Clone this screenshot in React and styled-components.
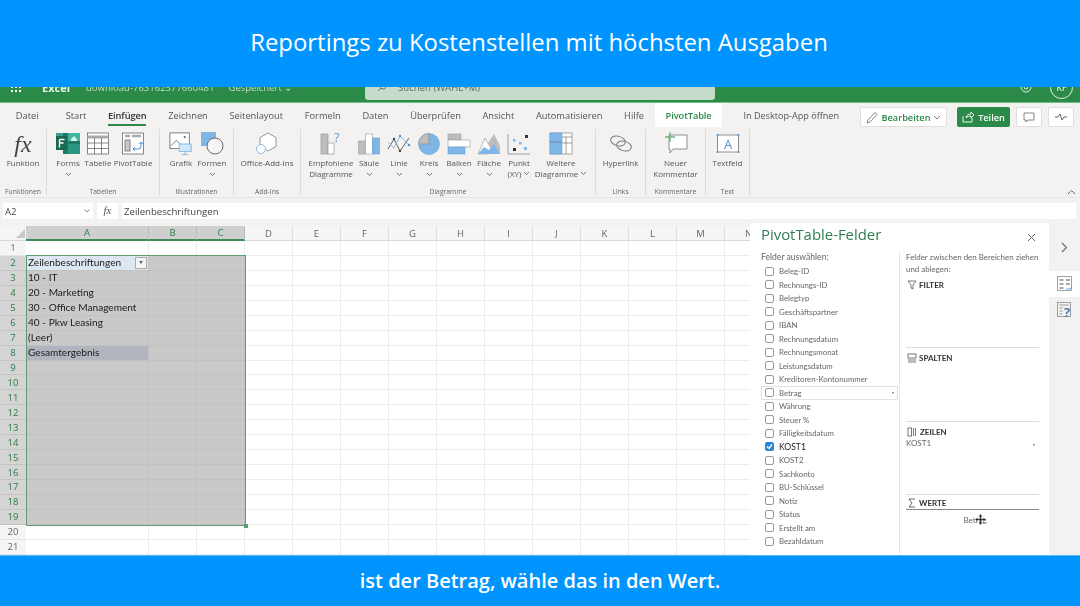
import React from "react";
import styled, { createGlobalStyle } from "styled-components";

const Global = createGlobalStyle`
  html, body { margin: 0; padding: 0; width: 1080px; height: 606px; overflow: hidden; background: #fff; }
  * { box-sizing: border-box; }
`;

const Page = styled.div`
  width: 1080px; height: 606px; display: flex; flex-direction: column; overflow: hidden;
  font-family: "Open Sans", "Liberation Sans", sans-serif; color: #444;
`;
const TopBanner = styled.div`
  height: 87px; background: #0094fe; color: #fff; display: flex; align-items: center; justify-content: center;
  font-size: 23.9px; padding: 0 2px 4px 0; flex: none;
`;
const BottomBanner = styled.div`
  height: 51px; background: #0094fe; color: #fff; display: flex; align-items: center; justify-content: center;
  font-size: 20px; font-weight: 600; padding-bottom: 2px; flex: none; border-top: 1px solid #5cb8f5;
`;
const Workspace = styled.div`
  flex: 1; display: flex; flex-direction: column; min-height: 0; background: #f3f2f1; filter: blur(0.4px);
`;
const AppBar = styled.div`height: 16px; background: #2b8a47; overflow: hidden; flex: none; border-bottom: 1px solid #6fbf80;`;
const AppBarInner = styled.div`
  height: 32px; margin-top: -16px; display: flex; align-items: center; color: #c4dfcc; font-size: 9.5px; position: relative;
`;
const Waffle = styled.div`
  width: 11px; margin-left: 11px; display: grid; grid-template-columns: repeat(3, 2px); gap: 2px;
  span { width: 2px; height: 2px; background: #fff; }
`;
const AppName = styled.div`margin-left: 20px; width: 44px; font-weight: 700; color: #e8f3ea; font-size: 11px;`;
const DocName = styled.div`width: 279px; white-space: nowrap; display: flex; gap: 14px;`;
const SearchBox = styled.div`
  width: 350px; height: 26px; background: #c6dccb; border-radius: 3px; color: #5d6d62;
  display: flex; align-items: center; gap: 11px; padding-left: 12px; font-size: 9.6px;
`;
const AppRight = styled.div`margin-left: auto; margin-right: 7px; display: flex; align-items: center; gap: 17px;`;
const Avatar = styled.div`
  width: 23px; height: 23px; border: 1px solid #e5f1e7; border-radius: 50%; font-size: 9px; color: #fff;
  display: flex; align-items: center; justify-content: center;
`;

const TabRow = styled.div`height: 24px; display: flex; align-items: stretch; padding-left: 5px; flex: none; font-size: 9.3px; color: #555;`;
const Tab = styled.div`
  padding: 0 10.8px; margin-right: ${p => p.$gap || 0}px; display: flex; align-items: center; white-space: nowrap; position: relative;
  color: ${p => p.$active ? "#333" : p.$context ? "#2b8a47" : "#555"};
  font-weight: ${p => (p.$active || p.$context) ? 600 : 400};
  letter-spacing: ${p => (p.$active || p.$context) ? "-0.1px" : 0};
  background: ${p => p.$context ? "#fff" : "transparent"};
  ${p => p.$active && `&::after { content: ""; position: absolute; left: 11px; right: 11px; bottom: 1px; height: 2px; background: #2b8a47; }`}
`;
const DesktopLink = styled.div`margin-left: 21px; display: flex; align-items: center; white-space: nowrap; font-size: 9.1px;`;
const TabRight = styled.div`margin-left: auto; display: flex; flex: none;`;
const EditButton = styled.div`
  width: 87px; height: 20px; margin-top: 4px; background: #fff; border: 1px solid #e0dfde; border-radius: 2px; color: #2b8a47; font-weight: 600;
  display: flex; align-items: center; justify-content: center; gap: 3px; font-size: 9.2px;
`;
const ShareButton = styled.div`
  width: 53px; height: 20px; margin: 4px 6px 0 10px; background: #2b8a47; border-radius: 2px; color: #fff; font-weight: 600;
  display: flex; align-items: center; justify-content: center; gap: 3px; font-size: 9.2px;
`;
const IconButton = styled.div`
  width: 26px; height: 20px; margin: 4px 6px 0 0; background: #fff; border: 1px solid #e0dfde; border-radius: 2px;
  display: flex; align-items: center; justify-content: center;
`;

const Ribbon = styled.div`
  height: 71px; display: flex; flex: none; position: relative; border-bottom: 1px solid #e6e5e4;
`;
const Group = styled.div`
  width: ${p => p.$w}px; flex: none; margin-right: 1px; display: flex; flex-direction: column; position: relative; padding-top: 5px;
  &::after { content: ""; position: absolute; right: -1px; top: 2px; bottom: 2px; width: 1px; background: #dcdbda; }
`;
const GroupButtons = styled.div`flex: 1; display: flex; padding-left: ${p => p.$pad || 0}px;`;
const GroupLabel = styled.div`height: 11px; text-align: center; font-size: 6.8px; color: #666; line-height: 12px;`;
const RibbonButton = styled.div`
  width: ${p => p.$w}px; flex: none; display: flex; flex-direction: column; align-items: center;
  font-size: 8px; line-height: 10.5px; color: #555; text-align: center; white-space: nowrap;
`;
const IconSlot = styled.div`height: 24px; margin-bottom: 2px; display: flex; align-items: center; justify-content: center;`;
const Fx = styled.span`font: italic 24px "Liberation Serif", serif; color: #444;`;
const Caret = styled.svg`width: 7px; height: 5px; display: ${p => p.$inline ? "inline-block" : "block"}; margin: ${p => p.$inline ? "0 0 1px 2px" : "3px auto 0"};`;
const Collapse = styled.svg`position: absolute; right: 4px; bottom: 2px; width: 9px; height: 6px;`;

const FormulaBar = styled.div`
  height: 22px; flex: none; padding: 5px 4px 0 3px; display: flex; gap: 4px; background: #f3f2f1;
`;
const NameBox = styled.div`
  width: 90px; height: 16px; background: #fff; display: flex; align-items: center; justify-content: space-between;
  padding: 0 3px 0 2px; font-size: 9.5px; color: #444;
`;
const FxBox = styled.div`width: 21px; height: 16px; background: #fff; text-align: center; font: italic 11px/15px "Liberation Serif", serif; color: #555;`;
const FormulaInput = styled.div`flex: 1; height: 16px; background: #fff; font-size: 9.6px; line-height: 17px; padding-left: 2px; color: #444;`;

const Main = styled.div`flex: 1; min-height: 0; display: flex; background: #f3f2f1;`;
const SheetArea = styled.div`width: 750px; flex: none; padding-top: 6px; overflow: hidden;`;
const Sheet = styled.div`
  position: relative; display: grid; background: #fff; width: 750px; height: 330px;
  grid-template-columns: 26px 123px 48px 48px repeat(11, 48px);
  grid-template-rows: 15px repeat(21, 14.95px);
  font-family: Lato, "Open Sans", sans-serif;
`;
const Corner = styled.div`
  background: #f5f5f5; border-bottom: 1px solid #d8d8d8; position: relative;
  &::after { content: ""; position: absolute; right: 1px; bottom: 2px; border-style: solid; border-width: 0 0 9px 9px; border-color: transparent transparent #c8c8c8 transparent; }
`;
const ColHead = styled.div`
  display: flex; align-items: center; justify-content: center; font-size: 9.5px; font-family: "Open Sans", sans-serif;
  background: ${p => p.$sel ? "#cfcfcf" : "#f5f5f5"};
  color: ${p => p.$sel ? "#2b7a45" : "#666"};
  border-right: 1px solid ${p => p.$sel ? "#bdbdbd" : "#e0e0e0"};
  border-bottom: ${p => p.$sel ? "2px solid #3f8a58" : "1px solid #d8d8d8"};
`;
const RowHead = styled.div`
  display: flex; align-items: center; justify-content: center; font-size: 9.5px; font-family: "Open Sans", sans-serif;
  background: ${p => p.$sel ? "#d4d4d4" : "#f5f5f5"};
  color: ${p => p.$sel ? "#2b7a45" : "#666"};
  border-bottom: 1px solid ${p => p.$sel ? "#c4c4c4" : "#e4e4e4"};
`;
const Cell = styled.div`
  position: relative; display: flex; align-items: center; padding: 0 0 1px 2px; font-size: 10.1px; color: #1a1a1a; white-space: nowrap;
  background: ${p => p.$bg || "#fff"};
  border-right: 1px solid ${p => p.$sel ? "#c2c2c2" : "#ececec"};
  border-bottom: 1px solid ${p => p.$sel ? "#c2c2c2" : "#ececec"};
`;
const FilterBtn = styled.div`
  position: absolute; right: 1px; top: 1px; width: 12px; height: 12px; background: #f4f4f4; border: 1px solid #aaa;
  display: flex; align-items: center; justify-content: center;
  &::after { content: ""; border-style: solid; border-width: 3px 2.5px 0; border-color: #666 transparent transparent; }
`;
const Selection = styled.div`
  position: absolute; left: 26px; top: 29px; width: 220px; height: 271px; border: 1.5px solid #5f9a73; pointer-events: none;
  &::after { content: ""; position: absolute; right: -3px; bottom: -3px; width: 4px; height: 4px; background: #5f9a73; }
`;

const Panel = styled.div`width: 299px; flex: none; margin-top: 3px; background: #fff; display: flex; flex-direction: column; position: relative; font-family: Lato, "Open Sans", sans-serif;`;
const PanelHead = styled.div`height: 29px; padding: 0 13px 0 11px; display: flex; align-items: flex-start; justify-content: space-between;`;
const PanelTitle = styled.div`font-family: "Open Sans", sans-serif; font-size: 14.9px; line-height: 22px; color: #2f7d4f;`;
const CloseIcon = styled.svg`margin-top: 10px;`;
const PanelColumns = styled.div`flex: 1; min-height: 0; display: flex;`;
const FieldCol = styled.div`width: 150px; flex: none; padding-left: 11px; border-right: 1px solid #e6e6e6; overflow: hidden;`;
const Hint = styled.div`font-size: 7.95px; line-height: 12px; color: #666; white-space: nowrap;`;
const FieldHint = styled(Hint)`height: 12.5px; font-size: 8.6px; line-height: 10px;`;
const FieldList = styled.div`display: flex; flex-direction: column;`;
const Field = styled.div`
  height: 13.5px; display: flex; align-items: center; gap: 5px; padding-left: 4px; margin-right: 1px; font-size: 7.8px; position: relative;
  color: ${p => p.$on ? "#222" : "#666"};
  font-size: ${p => p.$on ? "8.6px" : "7.8px"};
  ${p => p.$hover && `outline: 1px solid #e2e2e2; outline-offset: -1px;`}
`;
const Box = styled.div`
  width: 9px; height: 9px; border-radius: 2px; flex: none;
  border: 1px solid ${p => p.$on ? "#2b88d8" : "#999"}; background: ${p => p.$on ? "#2b88d8" : "#fff"};
  display: flex; align-items: center; justify-content: center;
`;
const MiniCaret = styled.span`position: absolute; right: 4px; top: 6px; border-style: solid; border-width: 2px 1.5px 0; border-color: #666 transparent transparent;`;
const ZoneCol = styled.div`flex: 1; min-width: 0; padding: 0 10px 0 6px; display: flex; flex-direction: column; margin-top: -1px;`;
const ZoneHint = styled(Hint)`height: 23.5px;`;
const Zone = styled.div`
  height: ${p => p.$h}px; flex: none; border-bottom: ${p => p.$line ? "1px solid #dedede" : 0};
  padding-top: 5px; font-size: 8px; color: #555;
`;
const ZoneTitle = styled.div`
  display: flex; align-items: center; gap: 2px; font-size: 8px; font-weight: 700; color: #333; height: 11px; padding-left: 1px;
  ${p => p.$under && `border-bottom: 1px solid #888; height: 12px; margin-top: -2px;`}
`;
const ZoneItem = styled.div`
  display: flex; align-items: center; height: 11px; padding-right: 5px; position: relative;
  font-size: 8px; color: #666; margin-top: ${p => p.$mt || 0}px; justify-content: ${p => p.$center ? "center" : "space-between"};
  padding-left: ${p => p.$center ? "10px" : 0};
`;
const Cursor = styled.svg`position: absolute; left: 69px; top: 0; width: 11px; height: 11px;`;
const Strip = styled.div`flex: 1; margin-top: 3px; display: flex; flex-direction: column; background: #f3f2f1;`;
const StripTop = styled.div`height: 48px; display: flex; align-items: center; justify-content: center;`;
const StripTab = styled.div`height: 26px; background: ${p => p.$active ? "#fff" : "transparent"}; display: flex; align-items: center; justify-content: center;`;

const BLUE = "#7fb6e8", GRAY = "#bdbdbd", DARK = "#6a6a6a";

const TableIcon = () => (<svg width="24" height="24" viewBox="0 0 24 24" fill="none" stroke={DARK} strokeWidth=".8"><rect x="1.5" y="1" width="21" height="21" fill="#fff"/><path d="M1.5 5h21" strokeWidth="3" stroke="#a8a8a8"/><path d="M1.5 11h21M1.5 16.5h21M8.5 6v16M15.5 6v16"/></svg>);
const PivotIcon = () => (<svg width="24" height="24" viewBox="0 0 24 24" fill="none" stroke={DARK} strokeWidth=".8"><rect x="1.5" y="1" width="21" height="21" fill="#fff"/><path d="M4 4h5M11 4h9" stroke="#aaa" strokeWidth="2.5"/><rect x="4" y="8" width="5" height="11" fill="#c8c8c8"/><path d="M12 17h5a3 3 0 0 0 3-3v-4M18 12l2-2 2 2M14 15l-2 2 2 2" stroke="#4a90d9" strokeWidth="1"/></svg>);
const FormsIcon = () => (<svg width="26" height="24" viewBox="0 0 26 24"><rect x="1" y="1" width="24" height="16" fill="#3aa08c"/><rect x="8" y="1" width="17" height="21" fill="#1f7a66"/><rect x="13" y="1" width="12" height="8" fill="#3fb6a0"/><rect x="13" y="12" width="12" height="10" fill="#2c9680"/><rect x="1" y="4" width="11" height="14" fill="#17694f"/><path d="M4.500 7.500h5M4.500 7.500v8M4.500 11h4" stroke="#fff" strokeWidth="1.400" fill="none"/><path d="M16 7l3-3 3 3v2h-6z" fill="#d5f0e8"/></svg>);
const PictureIcon = () => (<svg width="26" height="24" viewBox="0 0 26 26" fill="none"><rect x="1" y="1" width="21" height="17" fill="#fff" stroke={DARK} strokeWidth=".9"/><path d="M2 15l6-6 6 6" stroke={DARK} strokeWidth=".9"/><circle cx="17" cy="5.500" r="1.200" fill={DARK}/><rect x="11" y="13" width="13" height="8" fill="#d4e8f8" stroke={BLUE}/><path d="M17.500 21v3M14 24.500h7" stroke={BLUE}/></svg>);
const ShapesIcon = () => (<svg width="24" height="24" viewBox="0 0 24 24"><rect x="1" y="0" width="15" height="14" fill={BLUE}/><circle cx="15" cy="14" r="8" fill="#f5f5f5" stroke={DARK}/></svg>);
const AddinIcon = () => (<svg width="24" height="24" viewBox="0 0 24 24" fill="none" stroke="#8a8a8a" strokeWidth=".9"><path d="M13 1l8 4.500v9L13 19l-8-4.500v-9z" fill="#fff"/><circle cx="6" cy="17" r="4.500" fill="#fff" stroke={BLUE}/></svg>);
const RecoIcon = () => (<svg width="24" height="24" viewBox="0 0 24 24" fill="none"><rect x="2" y="2" width="7" height="20" fill={GRAY} stroke="#999" strokeWidth=".7"/><rect x="9" y="11" width="6" height="11" fill="#fff" stroke="#999" strokeWidth=".7"/><text x="15" y="10" fontSize="13" fill="#6a9fd0" fontFamily="Open Sans">?</text></svg>);
const ColumnIcon = () => (<svg width="24" height="24" viewBox="0 0 24 24"><rect x="1.500" y="9" width="7" height="13" fill={GRAY} stroke="#999" strokeWidth=".6"/><rect x="8.500" y="2" width="7" height="20" fill="#fff" stroke="#999" strokeWidth=".6"/><rect x="15.500" y="6" width="7" height="16" fill={BLUE} stroke="#6d9fcf" strokeWidth=".6"/></svg>);
const LineIcon = () => (<svg width="24" height="24" viewBox="0 0 24 24" fill="none"><path d="M1 17l6-10 6 12 9-13" stroke="#555" strokeWidth=".9"/><path d="M1 10l6 6 6-12 9 9" stroke={BLUE} strokeWidth=".9"/><g fill="#444"><circle cx="7" cy="7" r="1.200"/><circle cx="13" cy="19" r="1.200"/></g><g fill="#4a90d9"><circle cx="13" cy="4" r="1.200"/><circle cx="22" cy="13" r="1.200"/></g></svg>);
const PieIcon = () => (<svg width="24" height="24" viewBox="0 0 24 24"><circle cx="12" cy="12" r="10.500" fill={BLUE} stroke="#6d9fcf" strokeWidth=".6"/><path d="M12 12V1.500A10.500 10.500 0 0 0 1.500 12z" fill={GRAY} stroke="#888" strokeWidth=".6"/></svg>);
const BarIcon = () => (<svg width="24" height="24" viewBox="0 0 24 24"><rect x="1" y="2" width="13" height="6" fill={GRAY} stroke="#999" strokeWidth=".6"/><rect x="1" y="8" width="22" height="7" fill="#fff" stroke="#999" strokeWidth=".6"/><rect x="1" y="15" width="17" height="7" fill={BLUE} stroke="#6d9fcf" strokeWidth=".6"/></svg>);
const AreaIcon = () => (<svg width="24" height="24" viewBox="0 0 24 24"><path d="M1 22L8 6l3 5 6-9 6 12v8z" fill={GRAY}/><path d="M1 22l7-16 7 12-3 4z" fill="#fff" stroke="#888" strokeWidth=".5"/><path d="M1 22l6-7 5 3 5-6 6 10z" fill={BLUE}/></svg>);
const ScatterIcon = () => (<svg width="24" height="24" viewBox="0 0 24 24" fill="none"><path d="M1 2v20h22" stroke="#888" strokeWidth=".8"/><rect x="18" y="3" width="3" height="3" fill="#333"/><rect x="6" y="16" width="3" height="3" fill="#333"/><rect x="6" y="7" width="2.500" height="2.500" fill={BLUE}/><rect x="12" y="10" width="2.500" height="2.500" fill={BLUE}/><rect x="17" y="15" width="3" height="3" fill={BLUE}/></svg>);
const MoreIcon = () => (<svg width="24" height="24" viewBox="0 0 24 24" fill="none"><rect x="1" y="1" width="22" height="21" fill="#fff" stroke="#888" strokeWidth=".7"/><rect x="1" y="1" width="12" height="21" fill={BLUE} stroke="#6d9fcf" strokeWidth=".6"/><path d="M1 10h12M13 5h10M13 11h10M17 5v17" stroke="#777" strokeWidth=".7"/></svg>);
const LinkIcon = () => (<svg width="24" height="24" viewBox="0 0 24 24" fill="none" stroke="#777" strokeWidth="1"><ellipse cx="9" cy="9" rx="7.500" ry="4.800" transform="rotate(15 9 9)"/><ellipse cx="15" cy="14" rx="7.500" ry="4.800" transform="rotate(15 15 14)"/></svg>);
const CommentIcon = () => (<svg width="24" height="24" viewBox="0 0 24 24" fill="none"><path d="M5 3h18v14H9l-3 4v-4H5z" fill="#fff" stroke="#777" strokeWidth=".8"/><path d="M6 0v10M1 5h10" stroke="#6fb27f" strokeWidth="1.300"/></svg>);
const TextboxIcon = () => (<svg width="24" height="24" viewBox="0 0 24 24" fill="none"><rect x="1.500" y="3" width="21" height="17" fill="#fff" stroke="#777" strokeWidth=".8"/><g fill="#6d9fcf"><rect x="0.500" y="2" width="2" height="2"/><rect x="21.500" y="2" width="2" height="2"/><rect x="0.500" y="19" width="2" height="2"/><rect x="21.500" y="19" width="2" height="2"/></g><text x="12" y="16.500" fontSize="13" textAnchor="middle" fill="#5b8fc4" fontFamily="Open Sans">A</text></svg>);
const Down = ({ inline }) => (<Caret $inline={inline} viewBox="0 0 7 5" fill="none" stroke="#666" strokeWidth=".9"><path d="M1 1l2.500 2.500L6 1"/></Caret>);

const tabs = [["Datei", { $gap: 5.5 }], ["Start"], ["Einfügen", { $active: true }], ["Zeichnen"], ["Seitenlayout"], ["Formeln"], ["Daten"], ["Überprüfen"], ["Ansicht"], ["Automatisieren"], ["Hilfe"]];

const groups = [
  { label: "Funktionen", w: 46, pad: 0, items: [{ w: 46, icon: <Fx>fx</Fx>, text: "Funktion" }] },
  { label: "Tabellen", w: 112, pad: 6, items: [{ w: 30, icon: <FormsIcon />, text: "Forms", down: 1 }, { w: 30, icon: <TableIcon />, text: "Tabelle" }, { w: 40, icon: <PivotIcon />, text: "PivotTable" }] },
  { label: "Illustrationen", w: 73, pad: 6, items: [{ w: 30, icon: <PictureIcon />, text: "Grafik" }, { w: 32, icon: <ShapesIcon />, text: "Formen", down: 1 }] },
  { label: "Add-Ins", w: 66, pad: 0, items: [{ w: 66, icon: <AddinIcon />, text: "Office-Add-Ins" }] },
  { label: "Diagramme", w: 294, pad: 5, items: [
    { w: 50, icon: <RecoIcon />, text: <>Empfohlene<br />Diagramme</> },
    { w: 26, icon: <ColumnIcon />, text: "Säule", down: 1 }, { w: 34, icon: <LineIcon />, text: "Linie", down: 1 },
    { w: 26, icon: <PieIcon />, text: "Kreis", down: 1 }, { w: 34, icon: <BarIcon />, text: "Balken", down: 1 },
    { w: 26, icon: <AreaIcon />, text: "Fläche", down: 1 },
    { w: 34, icon: <ScatterIcon />, text: <>Punkt<br />(XY)<Down inline /></> },
    { w: 50, icon: <MoreIcon />, text: <>Weitere<br />Diagramme<Down inline /></> },
  ] },
  { label: "Links", w: 49, pad: 0, items: [{ w: 49, icon: <LinkIcon />, text: "Hyperlink" }] },
  { label: "Kommentare", w: 59, pad: 0, items: [{ w: 59, icon: <CommentIcon />, text: <>Neuer<br />Kommentar</> }] },
  { label: "Text", w: 43, pad: 0, items: [{ w: 43, icon: <TextboxIcon />, text: "Textfeld" }] },
];

const cols = ["A", "B", "C", "D", "E", "F", "G", "H", "I", "J", "K", "L", "M", "N"];
const rowText = { 2: "Zeilenbeschriftungen", 3: "10 - IT", 4: "20 - Marketing", 5: "30 - Office Management", 6: "40 - Pkw Leasing", 7: "(Leer)", 8: "Gesamtergebnis" };
const rows = Array.from({ length: 21 }, (_, i) => i + 1);
const selected = (r, c) => r >= 2 && r <= 19 && c < 3;
const cellBg = (r, c) => {
  if (c === 0 && r === 2) return "#dde7f1";
  if (c === 0 && r === 8) return "#b2b5bd";
  return selected(r, c) ? "#c9c9c9" : "#fff";
};

const fields = ["Beleg-ID", "Rechnungs-ID", "Belegtyp", "Geschäftspartner", "IBAN", "Rechnungsdatum", "Rechnungsmonat", "Leistungsdatum", "Kreditoren-Kontonummer", "Betrag", "Währung", "Steuer %", "Fälligkeitsdatum", "KOST1", "KOST2", "Sachkonto", "BU-Schlüssel", "Notiz", "Status", "Erstellt am", "Bezahldatum"];

export default function App() {
  return (
    <Page>
      <Global />
      <TopBanner>Reportings zu Kostenstellen mit höchsten Ausgaben</TopBanner>
      <Workspace>
        <AppBar>
          <AppBarInner>
            <Waffle>{Array.from({ length: 9 }, (_, i) => <span key={i} />)}</Waffle>
            <AppName>Excel</AppName>
            <DocName><span>download-763162577660481</span><span>Gespeichert ⌄</span></DocName>
            <SearchBox>
              <svg width="10" height="10" viewBox="0 0 10 10" fill="none" stroke="#6b7c70"><circle cx="6" cy="4" r="3"/><path d="M4 6L1 9"/></svg>
              Suchen (WAHL+M)
            </SearchBox>
            <AppRight>
              <svg width="14" height="14" viewBox="0 0 14 14" fill="none" stroke="#e5f1e7"><circle cx="7" cy="7" r="5"/><circle cx="7" cy="7" r="2"/></svg>
              <Avatar>KF</Avatar>
            </AppRight>
          </AppBarInner>
        </AppBar>
        <TabRow>
          {tabs.map(([t, props]) => <Tab key={t} {...props}>{t}</Tab>)}
          <Tab $context>PivotTable</Tab>
          <DesktopLink>In Desktop-App öffnen</DesktopLink>
          <TabRight>
            <EditButton>
              <svg width="13" height="13" viewBox="0 0 13 13" fill="none" stroke="#777" strokeWidth=".9"><path d="M1 12l1-3 7-7.500 2 2L4 11z"/></svg>
              Bearbeiten
              <svg width="8" height="5" viewBox="0 0 8 5" fill="none" stroke="#777"><path d="M1 1l3 3 3-3"/></svg>
            </EditButton>
            <ShareButton>
              <svg width="13" height="12" viewBox="0 0 13 12" fill="none" stroke="#fff" strokeWidth=".9"><path d="M1 5v6h9V7M4 7c0-3 3-4 5-4V1l3 3-3 3V5C7 5 5 5.500 4 7z"/></svg>
              Teilen
            </ShareButton>
            <IconButton><svg width="12" height="11" viewBox="0 0 12 11" fill="none" stroke="#777" strokeWidth=".9"><path d="M1 1h10v7H5L3 10V8H1z"/></svg></IconButton>
            <IconButton><svg width="12" height="8" viewBox="0 0 12 8" fill="none" stroke="#666"><path d="M0 4h3l2-3 2 6 2-3h3"/></svg></IconButton>
          </TabRight>
        </TabRow>
        <Ribbon>
          {groups.map(g => (
            <Group key={g.label} $w={g.w}>
              <GroupButtons $pad={g.pad}>
                {g.items.map((it, i) => (
                  <RibbonButton key={i} $w={it.w}>
                    <IconSlot>{it.icon}</IconSlot>
                    <div>{it.text}</div>
                    {it.down && <Down />}
                  </RibbonButton>
                ))}
              </GroupButtons>
              <GroupLabel>{g.label}</GroupLabel>
            </Group>
          ))}
          <Collapse viewBox="0 0 9 6" fill="none" stroke="#666"><path d="M1 5l3.500-3.500L8 5"/></Collapse>
        </Ribbon>
        <FormulaBar>
          <NameBox>A2<svg width="6" height="4" viewBox="0 0 6 4" fill="none" stroke="#666" strokeWidth=".8"><path d="M.5.5L3 3 5.500.5"/></svg></NameBox>
          <FxBox>fx</FxBox>
          <FormulaInput>Zeilenbeschriftungen</FormulaInput>
        </FormulaBar>
        <Main>
          <SheetArea>
            <Sheet>
              <Corner />
              {cols.map((c, i) => <ColHead key={c} $sel={i < 3}>{c}</ColHead>)}
              {rows.map(r => (
                <React.Fragment key={r}>
                  <RowHead $sel={r >= 2 && r <= 19}>{r}</RowHead>
                  {cols.map((c, i) => (
                    <Cell key={c} $sel={selected(r, i)} $bg={cellBg(r, i)}>
                      {i === 0 && rowText[r]}
                      {i === 0 && r === 2 && <FilterBtn />}
                    </Cell>
                  ))}
                </React.Fragment>
              ))}
              <Selection />
            </Sheet>
          </SheetArea>
          <Panel>
            <PanelHead>
              <PanelTitle>PivotTable-Felder</PanelTitle>
              <CloseIcon width="9" height="9" viewBox="0 0 9 9" stroke="#666" strokeWidth="1"><path d="M1 1l7 7M8 1l-7 7"/></CloseIcon>
            </PanelHead>
            <PanelColumns>
              <FieldCol>
                <FieldHint>Felder auswählen:</FieldHint>
                <FieldList>
                  {fields.map(f => (
                    <Field key={f} $on={f === "KOST1"} $hover={f === "Betrag"}>
                      <Box $on={f === "KOST1"}>
                        {f === "KOST1" && <svg width="7" height="7" viewBox="0 0 7 7" fill="none" stroke="#fff" strokeWidth="1.300"><path d="M1 3.500l2 2 3-4"/></svg>}
                      </Box>
                      {f}
                      {f === "Betrag" && <MiniCaret />}
                    </Field>
                  ))}
                </FieldList>
              </FieldCol>
              <ZoneCol>
                <ZoneHint>Felder zwischen den Bereichen ziehen<br />und ablegen:</ZoneHint>
                <Zone $h={73} $line>
                  <ZoneTitle>
                    <svg width="10" height="10" viewBox="0 0 10 10" fill="none" stroke="#555" strokeWidth=".8"><path d="M1 1h8L6 5v4L4 8V5z"/></svg>FILTER
                  </ZoneTitle>
                </Zone>
                <Zone $h={74} $line>
                  <ZoneTitle>
                    <svg width="10" height="10" viewBox="0 0 10 10" fill="none" stroke="#555" strokeWidth=".8"><rect x="1" y="1" width="8" height="4"/><path d="M1 7h8M1 9h8"/></svg>SPALTEN
                  </ZoneTitle>
                </Zone>
                <Zone $h={73} $line>
                  <ZoneTitle>
                    <svg width="11" height="10" viewBox="0 0 11 10" fill="none" stroke="#555" strokeWidth=".8"><rect x="1" y="1" width="3.500" height="8"/><path d="M6.500 1v8M8.500 1v8"/></svg>ZEILEN
                  </ZoneTitle>
                  <ZoneItem>KOST1<MiniCaret /></ZoneItem>
                </Zone>
                <Zone $h={50}>
                  <ZoneTitle $under>
                    <svg width="10" height="10" viewBox="0 0 10 10" fill="none" stroke="#444" strokeWidth=".8"><path d="M8 1H2l3 4-3 4h6"/></svg>WERTE
                  </ZoneTitle>
                  <ZoneItem $center $mt={4.5}>
                    Betrag
                    <Cursor viewBox="0 0 11 11" fill="#222" stroke="#eee" strokeWidth=".4"><path d="M5.500 0l2 2.500H6.300v2.200h2.200V3.500L11 5.500 8.500 7.500V6.300H6.300v2.200h1.200L5.500 11l-2-2.500h1.200V6.300H2.500v1.200L0 5.500l2.500-2V4.700h2.200V2.500H3.500z"/></Cursor>
                  </ZoneItem>
                </Zone>
              </ZoneCol>
            </PanelColumns>
          </Panel>
          <Strip>
            <StripTop><svg width="7" height="11" viewBox="0 0 7 11" fill="none" stroke="#666" strokeWidth="1.100"><path d="M1 1l4.500 4.500L1 10"/></svg></StripTop>
            <StripTab $active>
              <svg width="16" height="16" viewBox="0 0 16 16" fill="none" stroke="#8a8a8a" strokeWidth=".8"><rect x=".5" y=".5" width="14" height="14"/><path d="M2.500 4h4M9 4h4M2.500 8h4M9 8h4M2.500 12h4" strokeWidth="1.600"/><path d="M9 13h4a2 2 0 0 0 1.500-2" stroke="#4a90d9"/></svg>
            </StripTab>
            <StripTab>
              <svg width="16" height="16" viewBox="0 0 16 16" fill="none" stroke="#8a8a8a" strokeWidth=".8"><rect x=".5" y=".5" width="13" height="14"/><path d="M2.500 3h9M2.500 6h3M2.500 9h3M2.500 12h3" /><text x="7" y="15" fontSize="13" fontWeight="700" fill="#4a80b8" stroke="none" fontFamily="Open Sans">?</text></svg>
            </StripTab>
          </Strip>
        </Main>
      </Workspace>
      <BottomBanner>ist der Betrag, wähle das in den Wert.</BottomBanner>
    </Page>
  );
}
